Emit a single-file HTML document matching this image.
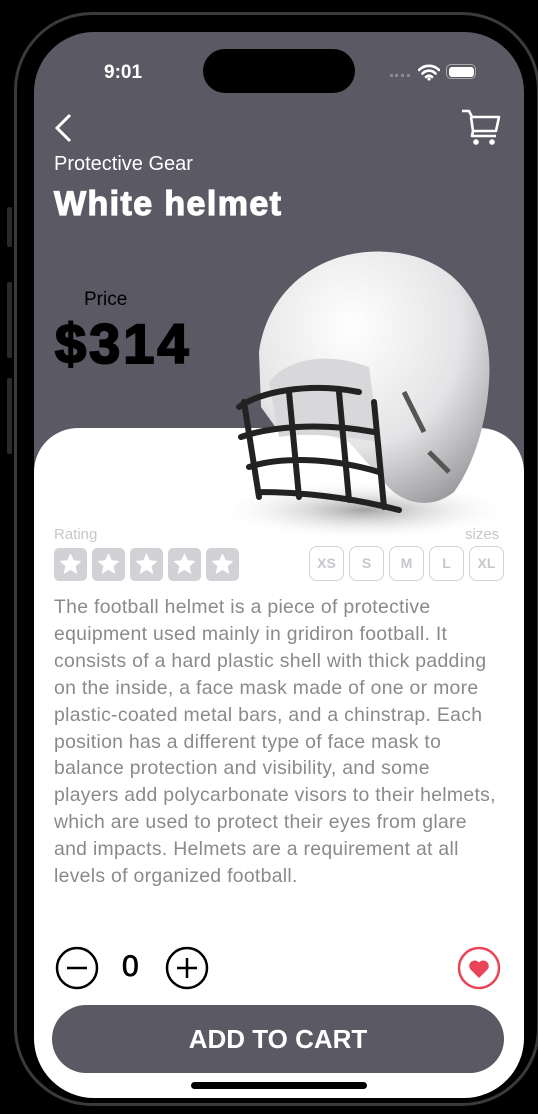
<!DOCTYPE html>
<html><head><meta charset="utf-8"><style>
*{margin:0;padding:0;box-sizing:border-box}
body{width:538px;height:1114px;background:#000;position:relative;overflow:hidden;font-family:"Liberation Sans",sans-serif}
.frame{position:absolute;left:14px;top:12px;width:526px;height:1094px;border-radius:78px;border:3px solid #3a3a3c;background:#000}
.btn{position:absolute;left:7px;width:5px;background:#2a2a2c;border-radius:2px}
.screen{position:absolute;left:34px;top:32px;width:490px;height:1066px;border-radius:60px;background:#5a5964;overflow:hidden}
.island{position:absolute;left:169px;top:17px;width:152px;height:44px;border-radius:22px;background:#000}
.time{position:absolute;left:70px;top:30px;color:#fff;font-size:19px;font-weight:bold}
.card{position:absolute;left:0;top:396px;width:490px;height:680px;background:#fff;border-radius:44px 44px 0 0}
.t{position:absolute}
.star{display:inline-block;width:33px;height:33px;background:#d1d1d6;border-radius:5px;margin-right:5px;vertical-align:top;position:relative}
.size{position:absolute;top:514px;width:35px;height:35px;border:1.5px solid #d1d1d6;border-radius:8px;color:#c7c7cc;font-size:14px;font-weight:bold;text-align:center;line-height:32px}
.desc{position:absolute;left:20px;top:562px;color:#8a8a8e;font-size:19.4px;line-height:26.9px;white-space:nowrap;letter-spacing:0.3px}
</style></head><body>
<div class="btn" style="top:207px;height:40px"></div>
<div class="btn" style="top:282px;height:76px"></div>
<div class="btn" style="top:378px;height:76px"></div>
<div class="frame"></div>
<div class="screen">
<div class="island"></div>
<div class="time">9:01</div>
<div class="t" style="left:356px;top:42px;width:20px;height:3px;border-top:3px dotted #8a8a90"></div>
<svg class="t" style="left:384px;top:31px" width="22" height="18" viewBox="0 0 22 18"><path d="M1 7a14 14 0 0 1 20 0M4.5 10.5a9 9 0 0 1 13 0M8 14a4 4 0 0 1 6 0" stroke="#fff" stroke-width="2.6" fill="none" stroke-linecap="round"/><circle cx="11" cy="16" r="1.6" fill="#fff"/></svg>
<div class="t" style="left:412px;top:32px;width:30px;height:15px;border:1.5px solid #aaa;border-radius:5px;padding:1.5px"><div style="width:100%;height:100%;background:#fff;border-radius:3px"></div></div>
<svg class="t" style="left:18px;top:80px" width="22" height="32" viewBox="0 0 22 32"><path d="M18 3L5 16l13 13" stroke="#fff" stroke-width="3" fill="none"/></svg>
<svg class="t" style="left:426px;top:76px" width="42" height="40" viewBox="0 0 42 40"><path d="M2 3h7l3 6h27l-3 14H13l-2-14M13 23l-1 5h24" stroke="#fff" stroke-width="2.6" fill="none" stroke-linejoin="round"/><circle cx="16" cy="34" r="2.8" fill="#fff"/><circle cx="32" cy="34" r="2.8" fill="#fff"/></svg>
<div class="t" style="left:20px;top:121px;color:#fff;font-size:20px">Protective Gear</div>
<div class="t" style="left:20px;top:153px;color:#fff;font-size:34px;font-weight:bold;letter-spacing:1.4px;-webkit-text-stroke:1.2px #fff">White helmet</div>
<div class="t" style="left:50px;top:257px;color:#000;font-size:19px">Price</div>
<div class="t" style="left:21px;top:279px;color:#000;font-size:56px;font-weight:bold;letter-spacing:3px;-webkit-text-stroke:2px #000">$314</div>
<div class="card"></div>
<svg class="t" style="left:165px;top:210px" width="330" height="300" viewBox="0 0 330 300">
<defs><radialGradient id="g" cx="0.4" cy="0.3" r="0.8"><stop offset="0" stop-color="#fff"/><stop offset="0.6" stop-color="#e4e4e6"/><stop offset="1" stop-color="#9a9a9e"/></radialGradient>
<radialGradient id="sh" cx="0.5" cy="0.5" r="0.5"><stop offset="0" stop-color="#666" stop-opacity=".6"/><stop offset="1" stop-color="#fff" stop-opacity="0"/></radialGradient></defs>
<ellipse cx="165" cy="268" rx="150" ry="30" fill="url(#sh)"/>
<path d="M60 110C70 40 130 5 190 10C260 15 295 70 290 140C287 190 270 230 255 250C230 270 200 260 185 240L150 200C120 190 95 185 80 190L62 165Z" fill="url(#g)"/>
<path d="M70 140C90 115 130 110 170 125L180 200C150 195 110 190 80 195Z" fill="#d8d8da"/>
<path d="M40 165C60 150 110 140 160 150M42 195C70 185 120 180 175 190M50 225C80 215 130 215 180 230M60 250C100 250 150 255 200 268M45 160L60 255M90 150L100 255M140 150L150 258M175 160L185 265" stroke="#222" stroke-width="6" fill="none" stroke-linecap="round"/>
<path d="M205 150l20 40M230 210l20 20" stroke="#555" stroke-width="5" fill="none"/>
</svg>
<div class="t" style="left:20px;top:494px;color:#c7c7cc;font-size:15px">Rating</div>
<div class="t" style="left:431px;top:494px;color:#c7c7cc;font-size:15px">sizes</div>
<div class="t" style="left:20px;top:516px;white-space:nowrap">
<span class="star"><svg width="33" height="33" viewBox="0 0 33 33"><path d="M16.5 5l3.2 7.3 7.9.7-6 5.2 1.8 7.8-6.9-4.1-6.9 4.1 1.8-7.8-6-5.2 7.9-.7z" fill="#fff"/></svg></span><span class="star"><svg width="33" height="33" viewBox="0 0 33 33"><path d="M16.5 5l3.2 7.3 7.9.7-6 5.2 1.8 7.8-6.9-4.1-6.9 4.1 1.8-7.8-6-5.2 7.9-.7z" fill="#fff"/></svg></span><span class="star"><svg width="33" height="33" viewBox="0 0 33 33"><path d="M16.5 5l3.2 7.3 7.9.7-6 5.2 1.8 7.8-6.9-4.1-6.9 4.1 1.8-7.8-6-5.2 7.9-.7z" fill="#fff"/></svg></span><span class="star"><svg width="33" height="33" viewBox="0 0 33 33"><path d="M16.5 5l3.2 7.3 7.9.7-6 5.2 1.8 7.8-6.9-4.1-6.9 4.1 1.8-7.8-6-5.2 7.9-.7z" fill="#fff"/></svg></span><span class="star"><svg width="33" height="33" viewBox="0 0 33 33"><path d="M16.5 5l3.2 7.3 7.9.7-6 5.2 1.8 7.8-6.9-4.1-6.9 4.1 1.8-7.8-6-5.2 7.9-.7z" fill="#fff"/></svg></span>
</div>
<div class="size" style="left:275px">XS</div>
<div class="size" style="left:315px">S</div>
<div class="size" style="left:355px">M</div>
<div class="size" style="left:395px">L</div>
<div class="size" style="left:435px">XL</div>
<div class="desc">The football helmet is a piece of protective<br>equipment used mainly in gridiron football. It<br>consists of a hard plastic shell with thick padding<br>on the inside, a face mask made of one or more<br>plastic-coated metal bars, and a chinstrap. Each<br>position has a different type of face mask to<br>balance protection and visibility, and some<br>players add polycarbonate visors to their helmets,<br>which are used to protect their eyes from glare<br>and impacts. Helmets are a requirement at all<br>levels of organized football.</div>
<svg class="t" style="left:21px;top:914px" width="44" height="44" viewBox="0 0 44 44"><circle cx="22" cy="22" r="20" stroke="#000" stroke-width="2.5" fill="none"/><path d="M12 22h20" stroke="#000" stroke-width="2.5"/></svg>
<div class="t" style="left:88px;top:918px;font-size:30px;color:#000;-webkit-text-stroke:0.8px #000">0</div>
<svg class="t" style="left:131px;top:914px" width="44" height="44" viewBox="0 0 44 44"><circle cx="22" cy="22" r="20" stroke="#000" stroke-width="2.5" fill="none"/><path d="M12 22h20M22 12v20" stroke="#000" stroke-width="2.5"/></svg>
<svg class="t" style="left:423px;top:914px" width="44" height="44" viewBox="0 0 44 44"><circle cx="22" cy="22" r="20" stroke="#ea4458" stroke-width="2.5" fill="none"/><path d="M22 32l-8.5-8.5a5 5 0 0 1 8.5-7a5 5 0 0 1 8.5 7z" fill="#ea4458"/></svg>
<div class="t" style="left:18px;top:973px;width:452px;height:68px;border-radius:34px;background:#5a5964;color:#fff;font-size:26px;font-weight:bold;text-align:center;line-height:68px">ADD TO CART</div>
<div class="t" style="left:157px;top:1050px;width:176px;height:7px;border-radius:4px;background:#000"></div>
</div>
</body></html>
